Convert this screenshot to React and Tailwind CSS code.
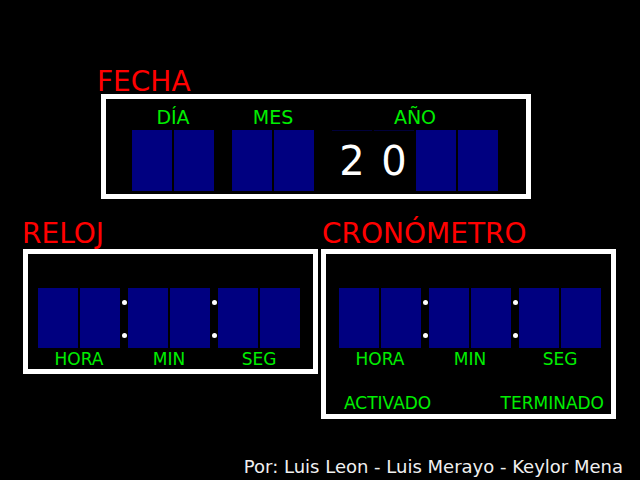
import React from "react";

const font = { fontFamily: '"DejaVu Sans", sans-serif' };

function Cell({ digit }) {
  if (digit !== undefined) {
    return (
      <div className="w-[40px] h-[61px] bg-black border-t border-[#00003a] flex items-center justify-center text-white text-[40px] leading-none">
        {digit}
      </div>
    );
  }
  return <div className="w-[40px] h-[61px] bg-[#000080]" />;
}

function Colon() {
  return (
    <div className="w-[8px] h-[60px] flex flex-col items-center justify-between pt-[12px] pb-[10px]">
      <div className="w-[5px] h-[5px] rounded-full bg-white" />
      <div className="w-[5px] h-[5px] rounded-full bg-white" />
    </div>
  );
}

function Pair({ label }) {
  return (
    <div className="flex flex-col items-center">
      <div className="flex gap-[2px]">
        <div className="w-[40px] h-[60px] bg-[#000080]" />
        <div className="w-[40px] h-[60px] bg-[#000080]" />
      </div>
      <div className="h-[22px] leading-[22px] text-[17px] text-[#00ee00]">{label}</div>
    </div>
  );
}

function Clock() {
  return (
    <div className="flex">
      <Pair label="HORA" />
      <Colon />
      <Pair label="MIN" />
      <Colon />
      <Pair label="SEG" />
    </div>
  );
}

export default function App() {
  return (
    <div className="w-[640px] h-[480px] bg-black flex flex-col overflow-hidden" style={font}>
      {/* FECHA */}
      <div className="pt-[70px] pl-[101px]">
        <div className="-ml-[4px] text-[28px] leading-[24px] text-[#ff0000]">FECHA</div>
        <div className="w-[430px] h-[105px] border-[5px] border-white flex gap-[18px] pl-[26px] pt-[7px]">
          <div className="flex flex-col items-center">
            <div className="h-[22px] leading-[22px] text-[19px] text-[#00ee00] mb-[2px]">DÍA</div>
            <div className="flex gap-[2px]">
              <Cell />
              <Cell />
            </div>
          </div>
          <div className="flex flex-col items-center">
            <div className="h-[22px] leading-[22px] text-[19px] text-[#00ee00] mb-[2px]">MES</div>
            <div className="flex gap-[2px]">
              <Cell />
              <Cell />
            </div>
          </div>
          <div className="flex flex-col items-center">
            <div className="h-[22px] leading-[22px] text-[19px] text-[#00ee00] mb-[2px]">AÑO</div>
            <div className="flex gap-[2px]">
              <Cell digit="2" />
              <Cell digit="0" />
              <Cell />
              <Cell />
            </div>
          </div>
        </div>
      </div>

      {/* RELOJ / CRONÓMETRO */}
      <div className="mt-[23px] pl-[23px] flex gap-[3px] items-start">
        <div>
          <div className="-ml-[1px] mb-[3px] text-[28px] leading-[24px] text-[#ff0000]">RELOJ</div>
          <div className="w-[295px] h-[125px] border-[5px] border-white pl-[10px] pt-[34px]">
            <Clock />
          </div>
        </div>
        <div>
          <div className="ml-[1px] mb-[3px] text-[28px] leading-[24px] text-[#ff0000]">CRONÓMETRO</div>
          <div className="w-[295px] h-[170px] border-[5px] border-white pl-[13px] pt-[34px]">
            <Clock />
            <div className="mt-[22px] flex justify-between pr-[7px] text-[17px] leading-[22px] text-[#00ee00]">
              <span className="ml-[5px]">ACTIVADO</span>
              <span>TERMINADO</span>
            </div>
          </div>
        </div>
      </div>

      <div className="mt-auto pb-[2px] pr-[17px] text-right text-[18px] leading-[22px] text-[#f0f0f0]">
        Por: Luis Leon - Luis Merayo - Keylor Mena
      </div>
    </div>
  );
}
